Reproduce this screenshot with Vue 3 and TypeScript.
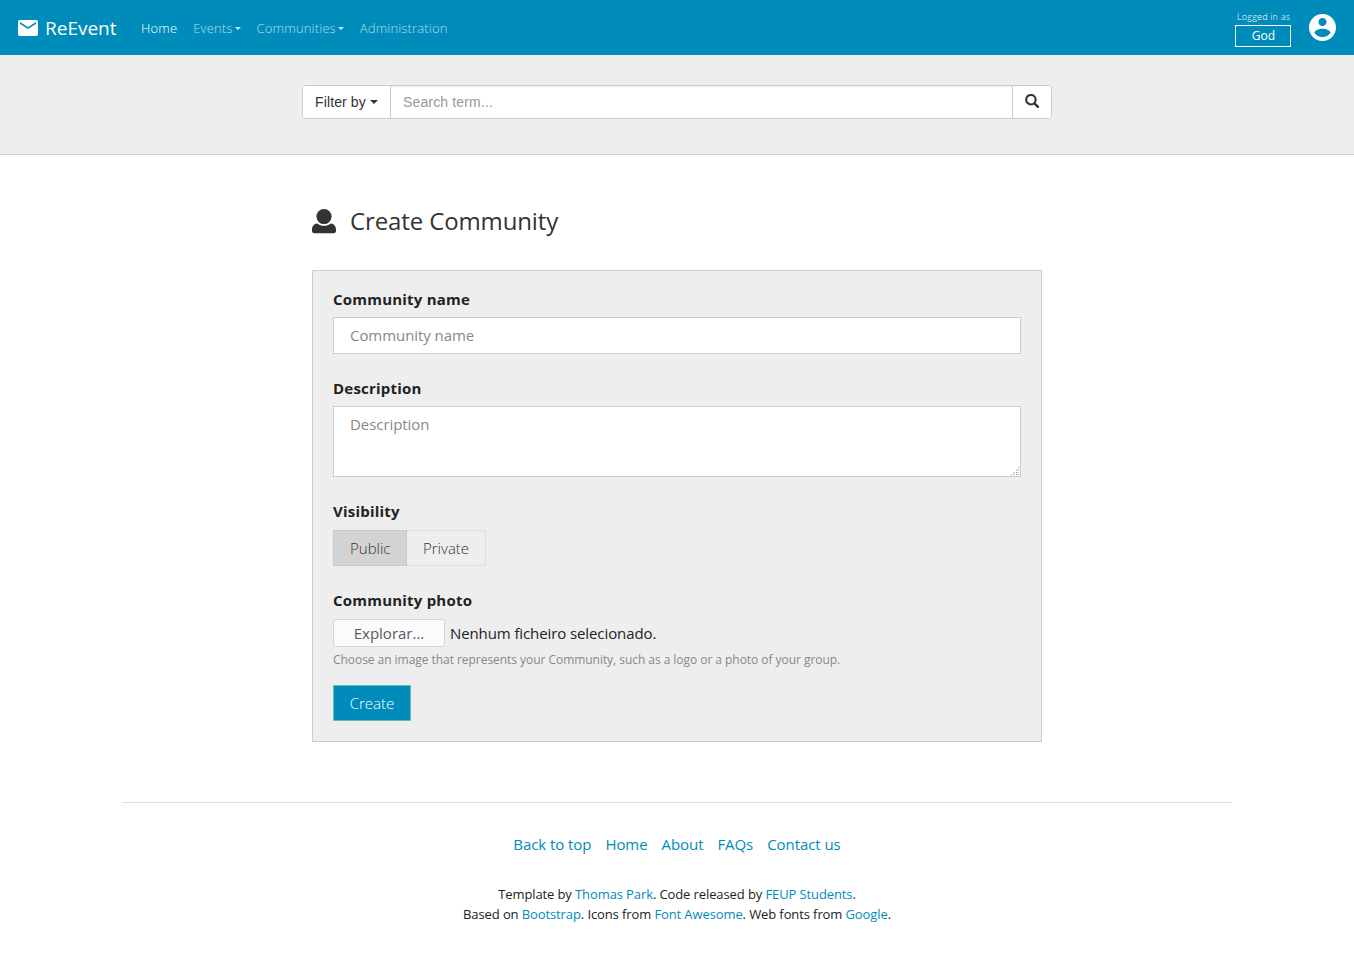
<script setup lang="ts">
import { ref } from 'vue'

interface NavItem {
  label: string
  active?: boolean
  menu?: boolean
}

const navItems: NavItem[] = [
  { label: 'Home', active: true },
  { label: 'Events', menu: true },
  { label: 'Communities', menu: true },
  { label: 'Administration' },
]
const footerLinks: string[] = ['Back to top', 'Home', 'About', 'FAQs', 'Contact us']
const visibilityOptions: string[] = ['Public', 'Private']

const visibility = ref('Public')
const search = ref('')
const name = ref('')
const description = ref('')
</script>

<template>
  <div class="page">
    <nav class="navbar">
      <a class="brand">
        <svg class="mail" viewBox="2 4 20 16" width="20" height="16">
          <path fill="#fff" d="M20 4H4c-1.100 0-1.990.9-1.990 2L2 18c0 1.100.9 2 2 2h16c1.100 0 2-.9 2-2V6c0-1.100-.9-2-2-2zm0 4l-8 5-8-5V6l8 5 8-5v2z" />
        </svg>
        <span>ReEvent</span>
      </a>
      <ul class="nav-list">
        <li v-for="item in navItems" :key="item.label" :class="{ active: item.active }">
          <span>{{ item.label }}</span><i v-if="item.menu" class="caret nav-caret"></i>
        </li>
      </ul>
      <div class="account">
        <small>Logged in as</small>
        <span class="user">God</span>
      </div>
      <svg class="avatar" viewBox="2 2 20 20" width="27" height="27">
        <path fill="#fff" d="M12 2C6.480 2 2 6.480 2 12s4.480 10 10 10 10-4.480 10-10S17.520 2 12 2zm0 3c1.660 0 3 1.340 3 3s-1.340 3-3 3-3-1.340-3-3 1.340-3 3-3zm0 14.200c-2.500 0-4.710-1.280-6-3.220.03-1.990 4-3.080 6-3.080 1.990 0 5.970 1.090 6 3.080-1.290 1.940-3.500 3.220-6 3.220z" />
      </svg>
    </nav>

    <header class="search-bar">
      <div class="search-group">
        <button type="button" class="filter"><span>Filter by</span><i class="caret"></i></button>
        <input v-model="search" type="text" placeholder="Search term..." />
        <button type="button" class="go" aria-label="Search">
          <svg viewBox="0 0 14 14" width="14" height="14">
            <circle cx="5.900" cy="5.700" r="4.750" fill="none" stroke="#333" stroke-width="2.100" />
            <path d="M9.400 9.300L13 12.800" stroke="#333" stroke-width="2.500" stroke-linecap="round" />
          </svg>
        </button>
      </div>
    </header>

    <main>
      <h1>
        <svg viewBox="0 0 24 24" width="24" height="24">
          <ellipse cx="12" cy="7.600" rx="7.600" ry="7.500" fill="#333" />
          <path fill="#333" d="M5.300 14.400C7.200 15.900 9.500 16.700 12 16.700s4.800-.8 6.700-2.300C22.200 14.700 24 17.200 24 20.700v1.300c0 1.400-.8 2.200-2.200 2.200H2.200C.8 24.200 0 23.400 0 22v-1.300c0-3.500 1.800-6 5.300-6.300z" />
        </svg>
        <span>Create Community</span>
      </h1>

      <form class="panel" @submit.prevent>
        <label for="name">Community name</label>
        <input id="name" v-model="name" class="field" type="text" placeholder="Community name" />

        <label for="description">Description</label>
        <div class="area">
          <textarea id="description" v-model="description" class="field" placeholder="Description"></textarea>
          <svg class="grip" viewBox="0 0 9 9" width="9" height="9" shape-rendering="crispEdges">
            <path fill="#888" d="M7 0h1v1h-1zM5 5h1v1h-1zM0 7h1v1h-1zM5 7h1v1h-1z" />
            <path fill="#c4c4c4" d="M5 2h1v2h-1zM7 2h1v2h-1zM2 5h2v1h-2zM7 5h1v1h-1zM2 7h2v1h-2zM7 7h1v1h-1z" />
          </svg>
        </div>

        <label>Visibility</label>
        <div class="toggle">
          <button
            v-for="option in visibilityOptions"
            :key="option"
            type="button"
            :class="{ selected: visibility === option }"
            @click="visibility = option"
          >{{ option }}</button>
        </div>

        <label>Community photo</label>
        <div class="file">
          <button type="button">Explorar...</button>
          <span>Nenhum ficheiro selecionado.</span>
        </div>
        <p class="hint">Choose an image that represents your Community, such as a logo or a photo of your group.</p>

        <button class="create" type="submit">Create</button>
      </form>
    </main>

    <footer>
      <div class="links">
        <a v-for="link in footerLinks" :key="link">{{ link }}</a>
      </div>
      <p>Template by <a>Thomas Park</a>. Code released by <a>FEUP Students</a>.</p>
      <p>Based on <a>Bootstrap</a>. Icons from <a>Font Awesome</a>. Web fonts from <a>Google</a>.</p>
    </footer>
  </div>
</template>

<style>
body {
  margin: 0;
  background: #fff;
}
</style>

<style scoped>
.page,
.page * {
  box-sizing: border-box;
}
.page {
  height: 969px;
  overflow: hidden;
  font-family: "Open Sans", "Noto Sans", sans-serif;
  font-size: 15px;
  line-height: 22px;
  color: #222;
  white-space: nowrap;
}
button,
input,
textarea {
  display: block;
  margin: 0;
  font-family: inherit;
  border-radius: 0;
  outline: none;
}
.navbar {
  display: flex;
  align-items: flex-start;
  height: 55px;
  padding: 0 18px;
  background: #008cba;
  color: #fff;
}
.brand {
  display: flex;
  align-items: center;
  gap: 7px;
  width: 123px;
  height: 56px;
  font-size: 19px;
}
.nav-list {
  display: flex;
  gap: 16px;
  margin: 0;
  padding: 0;
  height: 56px;
  align-items: center;
  list-style: none;
  font-size: 13px;
  font-weight: 300;
  letter-spacing: 0.16px;
  color: rgba(255, 255, 255, 0.7);
}
.nav-list li {
  display: flex;
  align-items: center;
}
.nav-list .active {
  color: #fff;
}
.caret {
  display: inline-block;
  border: 4px solid transparent;
  border-top-color: currentColor;
  border-bottom: 0;
}
.nav-caret {
  margin-left: 2px;
  border-width: 3px;
  border-bottom: 0;
  border-top-color: #cce8f1;
}
.account {
  display: flex;
  flex-direction: column;
  align-items: center;
  width: 56px;
  margin-left: auto;
  padding-top: 9px;
  font-weight: 300;
}
.account small {
  margin-left: 1px;
  font-size: 9px;
  line-height: 16px;
  letter-spacing: 0.22px;
}
.user {
  width: 56px;
  height: 22px;
  padding-left: 1px;
  border: 1px solid #fff;
  font-size: 12px;
  line-height: 20px;
  text-align: center;
  font-weight: 400;
}
.avatar {
  margin: 13.5px 0 0 18px;
}
.search-bar {
  display: flex;
  justify-content: center;
  height: 100px;
  padding-top: 30px;
  background: #eee;
  border-bottom: 1px solid #ccc;
}
.search-group {
  display: flex;
  width: 750px;
  height: 34px;
  border: 1px solid #ccc;
  border-radius: 4px;
  background: #fff;
  overflow: hidden;
  font-family: "Liberation Sans", Arial, sans-serif;
  font-size: 14px;
}
.search-group button {
  border: 0;
  background: #fff;
  color: #333;
  font-size: 14px;
}
.search-group .filter {
  display: flex;
  align-items: center;
  gap: 4px;
  width: 87px;
  padding: 0 0 0 12px;
  letter-spacing: 0.12px;
}
.search-group input {
  flex: 1;
  min-width: 0;
  border: solid #ccc;
  border-width: 0 1px;
  padding: 0 12px;
  font-size: 14px;
  letter-spacing: 0.15px;
  box-shadow: inset 0 1px 1px rgba(0, 0, 0, 0.075);
}
.search-group input::placeholder {
  color: #999;
}
.search-group .go {
  width: 38px;
  padding: 0 0 2px 12px;
}
.search-group .go svg {
  display: block;
}
main {
  width: 730px;
  margin: 49px auto 0;
}
h1 {
  display: flex;
  align-items: center;
  gap: 14px;
  height: 33px;
  margin: 0 0 33px;
  font-size: 24px;
  font-weight: 400;
  letter-spacing: -0.12px;
  color: #333;
}
h1 svg {
  overflow: visible;
}
.panel {
  height: 472px;
  padding: 17px 20px;
  background: #eee;
  border: 1px solid #ccc;
}
.panel label {
  display: block;
  height: 22px;
  margin-bottom: 7px;
  font-weight: 700;
  letter-spacing: 0.21px;
}
.field {
  width: 100%;
  height: 37px;
  padding: 6px 16px;
  border: 1px solid #ccc;
  background: #fff;
  font-size: 15px;
  line-height: 22px;
  letter-spacing: -0.06px;
  color: #222;
}
.field::placeholder {
  color: #888;
}
#name {
  padding: 5px 16px 7px;
  margin-bottom: 23px;
}
.area {
  position: relative;
  margin-bottom: 23px;
}
.area textarea {
  height: 71px;
  resize: none;
}
.grip {
  position: absolute;
  right: 1px;
  bottom: 1px;
}
.toggle {
  display: flex;
  height: 36px;
  margin: 8px 0 23px;
}
.toggle button {
  width: 79px;
  padding: 0 0 0 16px;
  border: 1px solid #dfdfdf;
  border-left: 0;
  background: transparent;
  font-size: 15px;
  font-weight: 300;
  text-align: left;
  color: #333;
}
.toggle .selected {
  width: 74px;
  border: 1px solid #c8c8c8;
  background: #d3d3d3;
}
.file {
  display: flex;
  align-items: center;
  gap: 5px;
  height: 28px;
  margin-top: 8px;
  letter-spacing: -0.1px;
}
.file button {
  width: 112px;
  height: 28px;
  padding: 0;
  border: 1px solid #cdd5e6;
  border-radius: 3px;
  background: #fbfbfc;
  font-size: 15px;
  line-height: 22px;
  color: #555b66;
}
.hint {
  margin: 2px 0 15px;
  font-size: 12px;
  line-height: 21px;
  letter-spacing: -0.045px;
  color: #888;
}
.create {
  width: 78px;
  height: 36px;
  padding: 0;
  border: 1px solid #6fb8b0;
  background: #008cba;
  color: #fff;
  font-size: 15px;
  font-weight: 300;
}
footer {
  width: 1110px;
  margin: 60px auto 0;
  padding-top: 30px;
  border-top: 1px solid #ddd;
  text-align: center;
  font-size: 13px;
}
footer a {
  color: #008cba;
}
.links {
  display: flex;
  justify-content: center;
  gap: 14px;
  margin-bottom: 29px;
  font-size: 15px;
  letter-spacing: -0.07px;
}
footer p {
  margin: 0;
  line-height: 20px;
  letter-spacing: -0.105px;
}
</style>
